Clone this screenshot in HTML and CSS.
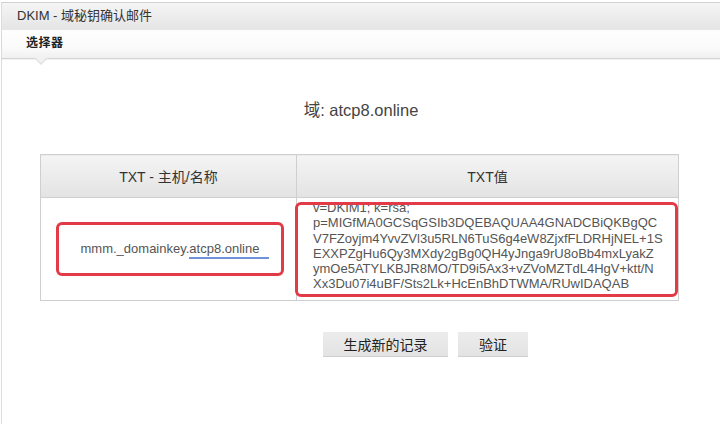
FILE: index.html
```html
<!DOCTYPE html>
<html lang="zh-CN">
<head>
<meta charset="utf-8">
<title>DKIM - 域秘钥确认邮件</title>
<link rel="stylesheet" href="styles.css">
</head>
<body>
<div class="window">
  <div class="titlebar">DKIM - 域秘钥确认邮件</div>
  <div class="tabbar">
    <span class="tab">选择器</span>
    <span class="pointer"></span>
  </div>
  <div class="content">
    <h2 class="domain">域: atcp8.online</h2>
    <table class="records">
      <thead>
        <tr>
          <th class="col-host">TXT - 主机/名称</th>
          <th class="col-value">TXT值</th>
        </tr>
      </thead>
      <tbody>
        <tr>
          <td class="host-cell">
            <div class="mark host-mark">mmm._domainkey.<span class="uline">atcp8.online</span></div>
          </td>
          <td class="value-cell">
            <div class="mark value-mark">
              <div class="value-text">
                <div class="ln">v=DKIM1; k=rsa;</div>
                <div class="ln">p=MIGfMA0GCSqGSIb3DQEBAQUAA4GNADCBiQKBgQC</div>
                <div class="ln">V7FZoyjm4YvvZVl3u5RLN6TuS6g4eW8ZjxfFLDRHjNEL+1S</div>
                <div class="ln">EXXPZgHu6Qy3MXdy2gBg0QH4yJnga9rU8oBb4mxLyakZ</div>
                <div class="ln">ymOe5ATYLKBJR8MO/TD9i5Ax3+vZVoMZTdL4HgV+ktt/N</div>
                <div class="ln">Xx3Du07i4uBF/Sts2Lk+HcEnBhDTWMA/RUwIDAQAB</div>
              </div>
            </div>
          </td>
        </tr>
      </tbody>
    </table>
    <div class="actions">
      <button class="btn btn-wide">生成新的记录</button>
      <button class="btn">验证</button>
    </div>
  </div>
</div>
</body>
</html>
```

FILE: styles.css
```css
* { box-sizing: border-box; }
html, body { margin: 0; padding: 0; background: #fff; }
body {
  font-family: "Liberation Sans", Arial, "Noto Sans CJK SC", sans-serif;
  color: #444;
  width: 720px;
  height: 424px;
  overflow: hidden;
}
.window {
  margin-top: 2px;
  margin-left: 1px;
  border-left: 1px solid #dcdcdc;
  border-top: 1px solid #d2d2d2;
  height: 422px;
}
.titlebar {
  height: 27px;
  padding-left: 15px;
  line-height: 25px;
  font-size: 13px;
  color: #333;
  background: linear-gradient(#f5f5f5, #e5e5e5);
  border-bottom: 1px solid #e6e6e6;
}
.tabbar {
  position: relative;
  height: 29px;
  padding-left: 24px;
  line-height: 26px;
  font-size: 12px;
  color: #222;
  background: linear-gradient(#fefefe 0%, #fbfbfb 60%, #f0f0f0 100%);
  border-bottom: 1px solid #d4d4d4;
  box-shadow: 0 1px 1px rgba(0,0,0,0.05);
}
.tab { font-weight: bold; letter-spacing: 0.5px; }
.pointer {
  position: absolute;
  left: 32px;
  bottom: -7px;
  width: 0;
  height: 0;
  border-left: 7px solid transparent;
  border-right: 7px solid transparent;
  border-top: 7px solid #e2e2e2;
}
.pointer::after {
  content: "";
  position: absolute;
  left: -6px;
  top: -8px;
  border-left: 6px solid transparent;
  border-right: 6px solid transparent;
  border-top: 6px solid #f1f1f1;
}
.content { padding-top: 41px; }
.domain {
  margin: 0;
  text-align: center;
  font-weight: normal;
  font-size: 16.5px;
  line-height: 20px;
  color: #444;
}
.records {
  margin: 34px 0 0 38px;
  width: 639px;
  border-collapse: collapse;
  table-layout: fixed;
}
.records th, .records td {
  border: 1px solid #cfcfcf;
  padding: 0;
}
.records th {
  height: 43px;
  font-weight: normal;
  font-size: 14px;
  color: #333;
  background: linear-gradient(#f4f4f4, #e3e3e3);
  text-align: center;
}
.col-host { width: 256px; }
.records td { height: 103px; vertical-align: top; }
.mark {
  border: 3px solid #e23a47;
  border-radius: 6px;
}
.host-cell { vertical-align: middle !important; }
.host-mark {
  margin: 0 12px 0 15px;
  height: 54px;
  display: flex;
  align-items: center;
  justify-content: center;
  font-size: 13px;
  color: #555;
  padding-bottom: 1px;
}
.uline { position: relative; }
.uline::after {
  content: "";
  position: absolute;
  left: 0;
  right: -10px;
  bottom: -3px;
  height: 2px;
  background: #6e92dc;
}
.value-cell { padding-top: 4px !important; }
.value-mark {
  margin-left: -2px;
  height: 95px;
  overflow: hidden;
  background: #fff;
  position: relative;
}
.value-text {
  margin-top: -5px;
  padding-left: 15px;
  font-size: 13px;
  line-height: 15.3px;
  color: #555;
  white-space: nowrap;
}
.actions {
  display: flex;
  gap: 10px;
  margin-top: 31px;
  padding-left: 321px;
}
.btn {
  height: 25px;
  border: none;
  border-bottom: 1px solid #cfcfcf;
  background: linear-gradient(#ececec, #e3e3e3);
  font-family: "Liberation Sans", Arial, "Noto Sans CJK SC", sans-serif;
  font-size: 14px;
  color: #222;
  padding: 0;
  width: 70px;
}
.btn-wide { width: 125px; }
```
